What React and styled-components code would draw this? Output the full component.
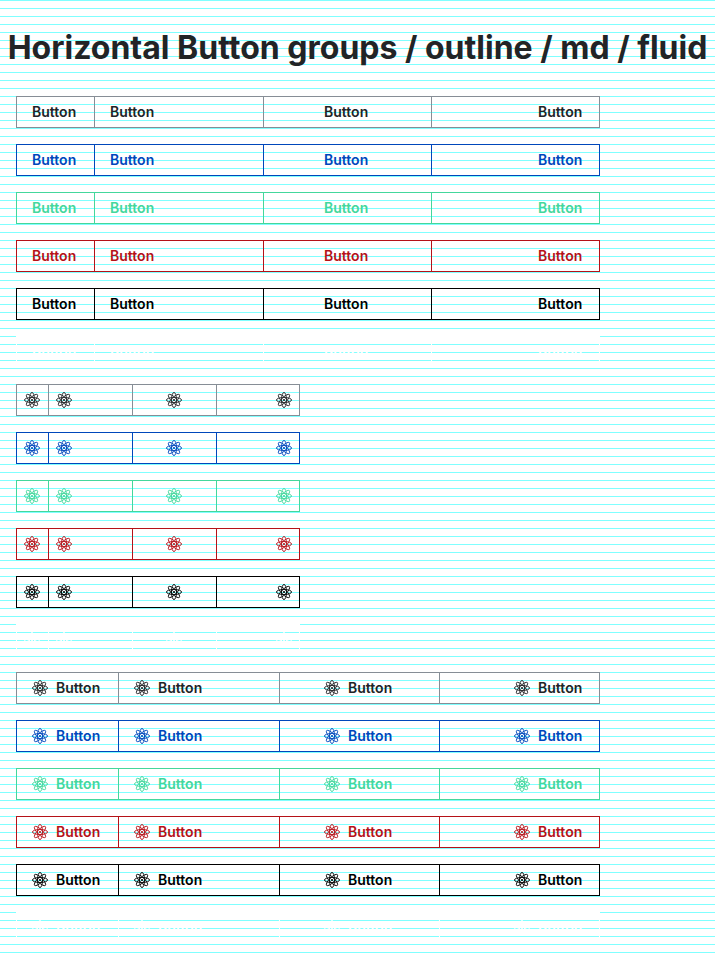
import React from "react";
import styled, { createGlobalStyle, css } from "styled-components";

const GlobalStyle = createGlobalStyle`
  *, *::before, *::after { box-sizing: border-box; }
  html { background: #fff; }
  body {
    margin: 0;
    font-family: Inter, "Liberation Sans", sans-serif;
    color: #222426;
  }
`;

const variants = {
  default: { text: "#222426", border: "#868e96" },
  primary: { text: "#0047bb", border: "#0047bb" },
  success: { text: "#44d79c", border: "#44d79c" },
  danger: { text: "#b51218", border: "#b51218" },
  black: { text: "#000", border: "#000" },
  white: { text: "#fff", border: "#fff" },
};

const Page = styled.main`
  min-height: 100vh;
  overflow: hidden;
  background: repeating-linear-gradient(#80ffff 0 1px, transparent 1px 8px);
`;

const Title = styled.h1`
  display: flex;
  justify-content: center;
  margin: 0;
  padding: 28px 8px;
  font-size: 32px;
  line-height: 40px;
  font-weight: 700;
  white-space: nowrap;
`;

const Stack = styled.div`
  display: flex;
  flex-direction: column;
  gap: 16px;
  padding: 0 16px 16px;
`;

const Group = styled.div`
  display: flex;
  width: 100%;
  max-width: ${({ $narrow }) => ($narrow ? "284px" : "584px")};
`;

const Button = styled.button`
  display: flex;
  align-items: center;
  gap: 8px;
  height: 32px;
  margin: 0;
  padding: ${({ $iconOnly }) => ($iconOnly ? "0 8px 0 7px" : "0 16px 0 15px")};
  border: 1px solid ${({ $variant }) => variants[$variant].border};
  border-right-width: 0;
  background: transparent;
  color: ${({ $variant }) => variants[$variant].text};
  font: 600 14px/24px Inter, "Liberation Sans", sans-serif;
  justify-content: ${({ $align }) => $align};
  cursor: pointer;
  ${({ $fluid }) => ($fluid ? css`flex: 1 1 0;` : css`flex: none;`)}

  &:last-child {
    border-right-width: 1px;
    padding-right: ${({ $iconOnly }) => ($iconOnly ? "7px" : "15px")};
  }
`;

const Label = styled.span`
  min-width: 46px;
  text-align: left;
`;

const Icon = styled.svg`
  flex: none;
  width: 16px;
  height: 16px;
`;

function Atom() {
  return (
    <Icon viewBox="0 0 16 16" fill="none" stroke="currentColor" strokeWidth="0.9" aria-hidden="true">
      {[0, 45, 90, 135].map((angle) => (
        <ellipse key={angle} cx="8" cy="8" rx="7.6" ry="2.5" transform={`rotate(${angle} 8 8)`} />
      ))}
      <circle cx="8" cy="8" r="1.1" fill="currentColor" stroke="none" />
    </Icon>
  );
}

const slots = [
  { align: "flex-start", fluid: false },
  { align: "flex-start", fluid: true },
  { align: "center", fluid: true },
  { align: "flex-end", fluid: true },
];

const sections = [
  { id: "text", icon: false, label: true },
  { id: "icon", icon: true, label: false },
  { id: "both", icon: true, label: true },
];

export default function App() {
  return (
    <Page>
      <GlobalStyle />
      <Title>Horizontal Button groups / outline / md / fluid</Title>
      {sections.map(({ id, icon, label }) => (
        <Stack key={id}>
          {Object.keys(variants).map((variant) => (
            <Group key={variant} role="group" $narrow={!label}>
              {slots.map(({ align, fluid }, index) => (
                <Button
                  key={index}
                  type="button"
                  aria-label={label ? undefined : "Atom"}
                  $variant={variant}
                  $align={align}
                  $fluid={fluid}
                  $iconOnly={!label}
                >
                  {icon && <Atom />}
                  {label && <Label>Button</Label>}
                </Button>
              ))}
            </Group>
          ))}
        </Stack>
      ))}
    </Page>
  );
}
